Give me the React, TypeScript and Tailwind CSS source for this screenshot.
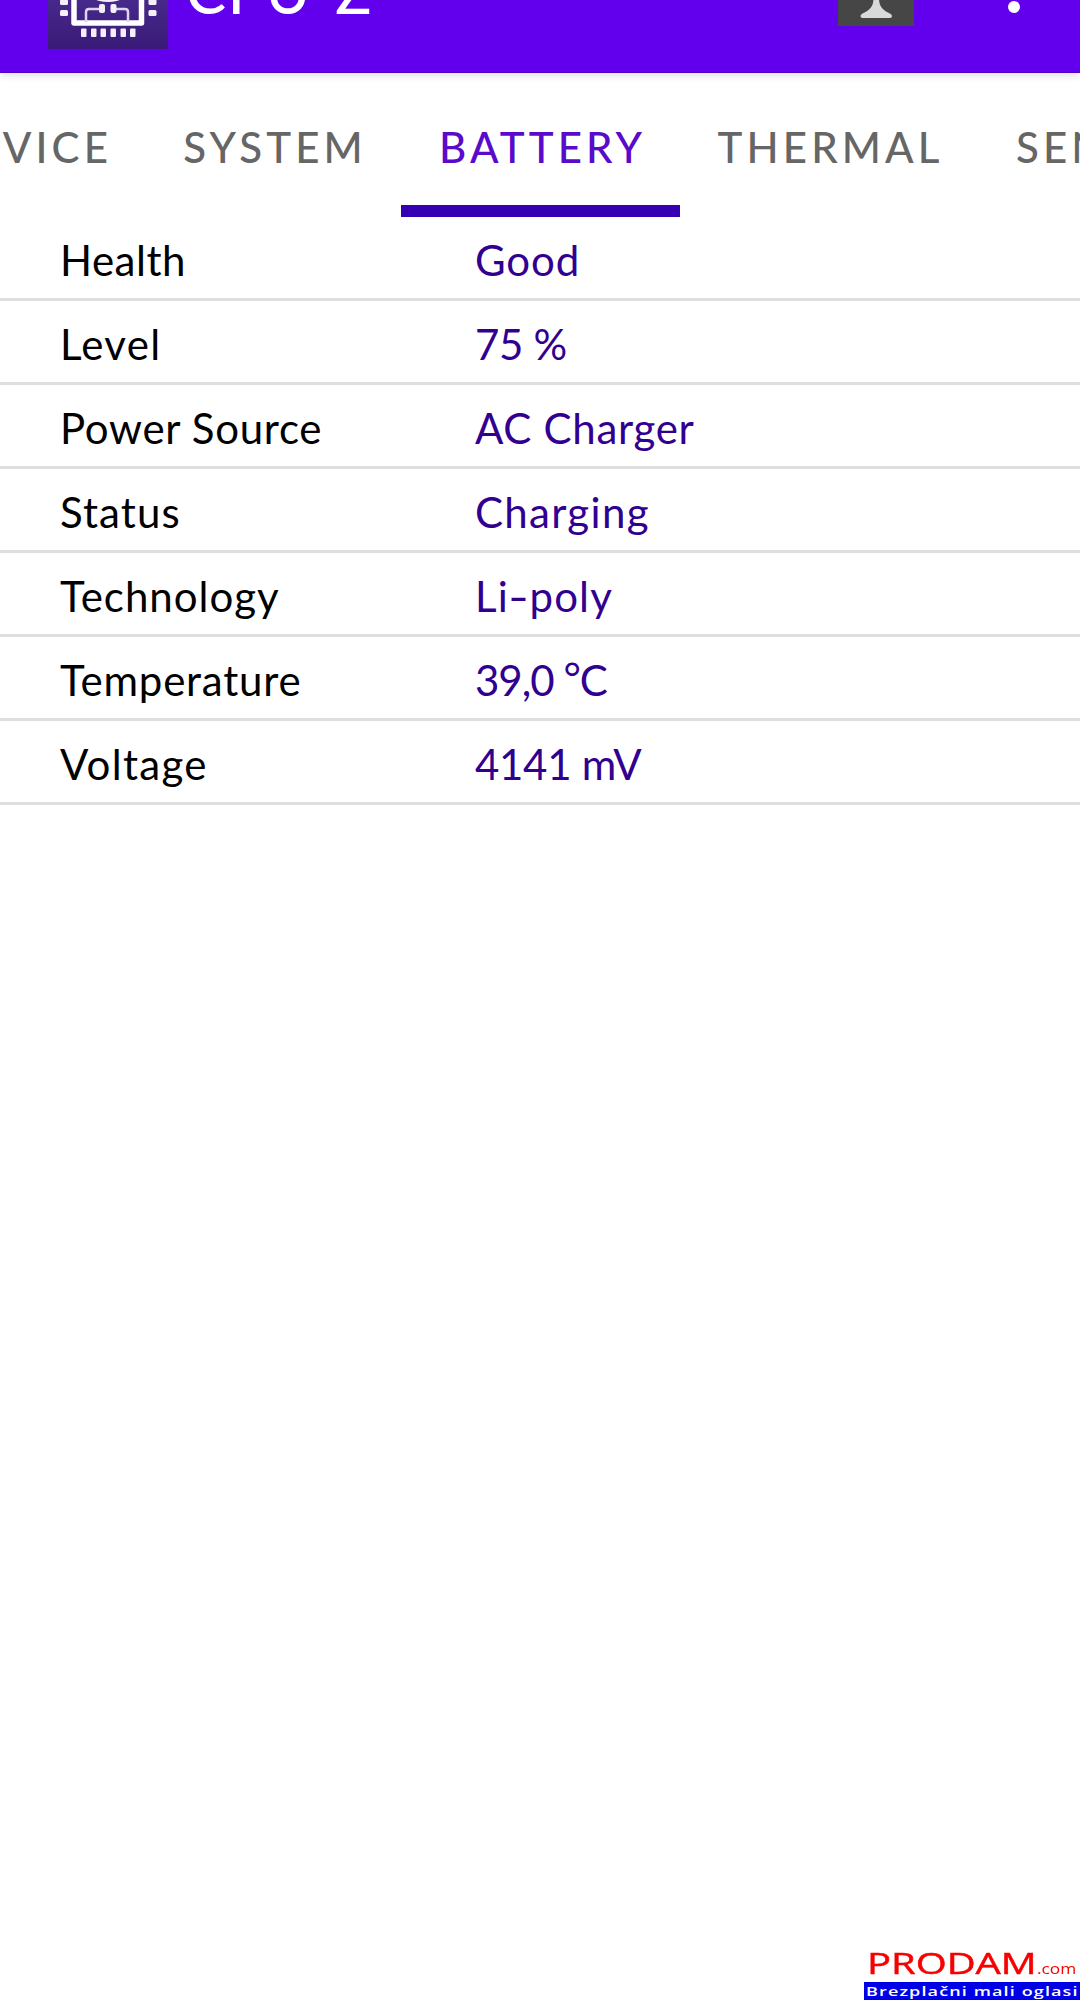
import type { ReactNode } from 'react'

type Row = { label: string; value: ReactNode; labelClass: string; valueClass: string }

const rows: Row[] = [
  { label: 'Health', value: 'Good', labelClass: 'tracking-[0.5px]', valueClass: 'tracking-[0.9px]' },
  { label: 'Level', value: '75 %', labelClass: 'tracking-[1.3px]', valueClass: 'tracking-[-0.3px]' },
  { label: 'Power Source', value: 'AC Charger', labelClass: 'tracking-[0.7px]', valueClass: 'tracking-[0.7px]' },
  { label: 'Status', value: 'Charging', labelClass: 'tracking-[1.1px]', valueClass: 'tracking-[1.3px]' },
  {
    label: 'Technology',
    value: (
      <>
        Li<span className="mx-[2px] inline-block scale-x-[1.35]">-</span>poly
      </>
    ),
    labelClass: 'tracking-[1px]',
    valueClass: 'tracking-[1.1px]',
  },
  {
    label: 'Temperature',
    value: (
      <>
        39,0 <span className="inline-block -translate-y-[3px]">°</span>C
      </>
    ),
    labelClass: 'tracking-[0.8px]',
    valueClass: 'tracking-[-1px]',
  },
  { label: 'Voltage', value: '4141 mV', labelClass: 'tracking-[1.3px]', valueClass: 'tracking-[-0.3px]' },
]

const pins = [81, 91, 100.5, 110.5, 120.5, 130]

function ChipIcon() {
  return (
    <svg viewBox="48 0 120 49" className="h-[49px] w-[120px] shrink-0">
      <defs>
        <linearGradient id="chipBg" x1="0" y1="0" x2="0" y2="1">
          <stop offset="0%" stopColor="#46298a" />
          <stop offset="100%" stopColor="#3a1a78" />
        </linearGradient>
      </defs>
      <rect x="48" y="0" width="120" height="49" fill="url(#chipBg)" />
      <g className="blur-[0.6px]">
        <g fill="none" stroke="#fff">
          <path d="M74 -4 V23 H141.500 V-4" strokeWidth="5.500" strokeLinejoin="round" />
          <path d="M86 22 V12 Q86 9 89 9 H102 M113 9 H125 Q128 9 128 12 V22" strokeWidth="2.500" stroke="#ddd5ee" />
        </g>
        <g fill="#f4effb">
          <rect x="60" y="-1" width="8" height="6" rx="1.500" />
          <rect x="60" y="10" width="8" height="6" rx="1.500" />
          <rect x="148.500" y="-1" width="8" height="6" rx="1.500" />
          <rect x="148.500" y="10" width="8" height="6" rx="1.500" />
          <rect x="99" y="4" width="6" height="9" rx="2" />
          <rect x="110.500" y="4" width="6" height="9" rx="2" />
          <ellipse cx="108" cy="-1" rx="12" ry="3" />
          {pins.map((x) => (
            <rect key={x} x={x} y="28.500" width="5.500" height="8.500" rx="1" />
          ))}
        </g>
      </g>
    </svg>
  )
}

function InfoIcon() {
  return (
    <svg viewBox="838 0 76 26" className="h-[26px] w-[76px] shrink-0">
      <rect x="838" y="0" width="76" height="26" fill="#464646" />
      <path
        d="M873.500 -2 H879 C879 6 882 10 890 13.500 Q892 14.500 892 16 Q892 18 890 18 H862.500 Q860.500 18 860.500 16 Q860.500 14.500 862.500 13.500 C870.500 10 873.500 6 873.500 -2 Z"
        fill="#d9d9d9"
      />
    </svg>
  )
}

function Tab({ text, box, active }: { text: string; box: string; active?: boolean }) {
  return (
    <div
      className={`flex h-[144px] shrink-0 flex-col whitespace-nowrap text-[42px] font-medium tracking-[4.1px] ${box} ${
        active ? 'text-[#5a0acb]' : 'text-[#666666]'
      }`}
    >
      <span className={`pt-[48px] leading-[52px] ${active ? 'pl-[4px]' : ''}`}>{text}</span>
      {active && <div className="mt-auto h-3 w-full bg-[#3700b3]" />}
    </div>
  )
}

export default function App() {
  return (
    <div className="flex h-[2000px] w-[1080px] flex-col overflow-hidden bg-white font-['Lato','Open_Sans',sans-serif]">
      <header className="z-10 flex h-[73px] shrink-0 items-start border-b border-[#5303c8] bg-[#6200ee] pl-12 shadow-[0_2px_8px_rgba(0,0,0,0.14)]">
        <ChipIcon />
        <h1 className="-mt-[51px] ml-[18px] w-[652px] whitespace-nowrap text-[60px] font-medium leading-[84px] tracking-[1.7px] text-white">
          CPU-Z
        </h1>
        <InfoIcon />
        <div className="ml-[94px] mt-px size-3 rounded-full bg-white" />
      </header>

      <nav className="flex h-[144px] shrink-0 overflow-hidden">
        <Tab text="DEVICE" box="w-[147px] items-end pr-[35px]" />
        <Tab text="SYSTEM" box="w-[254px] items-center pl-[2px]" />
        <Tab text="BATTERY" box="w-[279px] items-center" active />
        <Tab text="THERMAL" box="w-[299px] items-center pl-[2px]" />
        <Tab text="SENSORS" box="w-[299px] items-start pl-[37px]" />
      </nav>

      <main className="flex flex-1 flex-col text-[42px] leading-[52px]">
        {rows.map((r) => (
          <div key={r.label} className="flex h-[84px] shrink-0 border-b-3 border-[#dedede] pl-[60px] pt-[17px]">
            <div className="w-[415px] whitespace-nowrap text-black">
              <span className={r.labelClass}>{r.label}</span>
            </div>
            <div className="whitespace-nowrap text-[#310091]">
              <span className={r.valueClass}>{r.value}</span>
            </div>
          </div>
        ))}
      </main>

      <footer className="flex w-[216px] flex-col self-end font-['Open_Sans',sans-serif]">
        <div className="flex h-[38px] items-baseline pl-[3px] text-[#f80000]">
          <span className="w-[170px] origin-left scale-x-[1.33] text-[30px] font-medium leading-[38px] [-webkit-text-stroke:0.5px]">
            PRODAM
          </span>
          <span className="origin-left scale-x-[1.15] text-[15px] font-medium">.com</span>
        </div>
        <div className="h-[18px] bg-[#0000e6] pl-0.5 text-white">
          <span className="block origin-left translate-y-px scale-x-[1.5] whitespace-nowrap text-[12px] font-semibold leading-[18px] tracking-[0.75px]">
            Brezplačni mali oglasi
          </span>
        </div>
      </footer>
    </div>
  )
}
